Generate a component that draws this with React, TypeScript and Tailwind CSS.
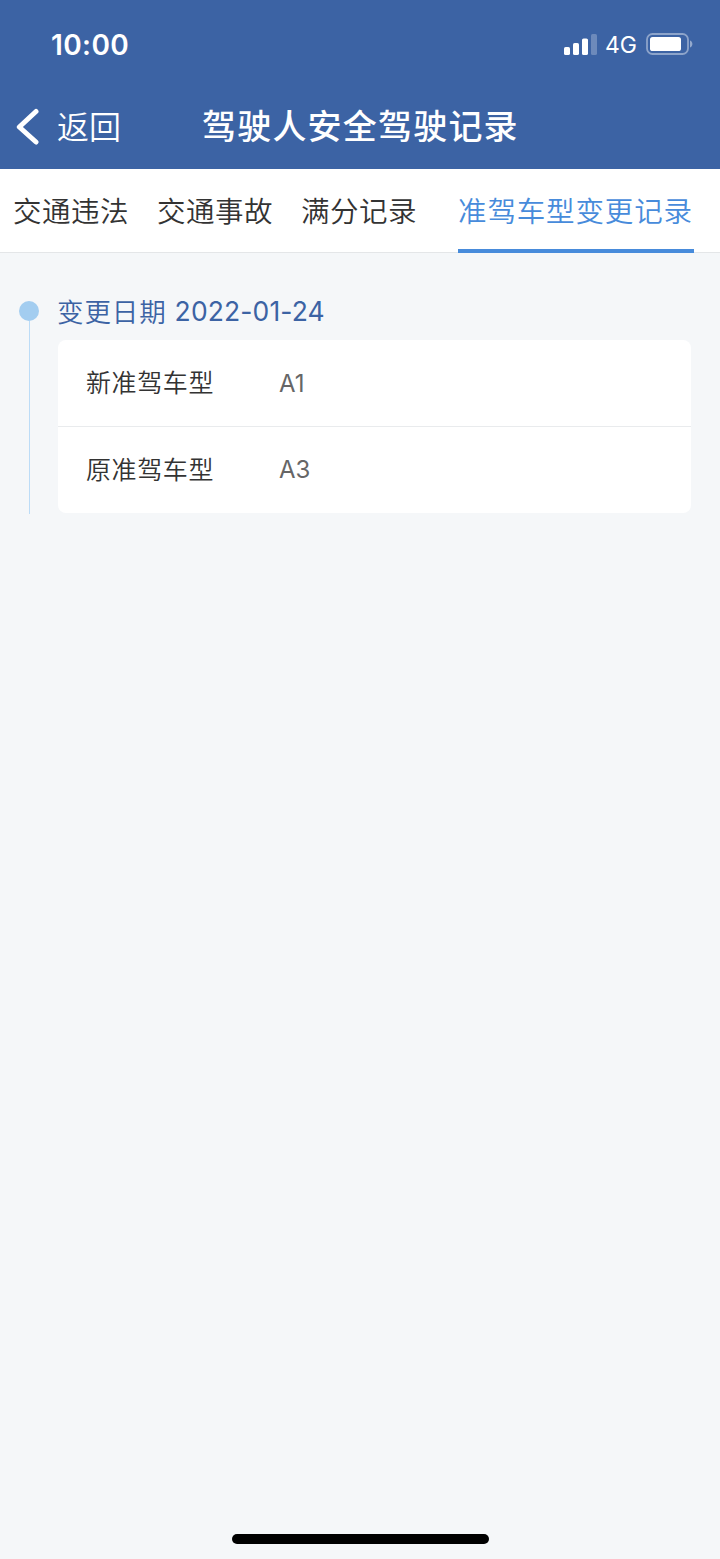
import type { ReactNode } from 'react';

const tabs = ['交通违法', '交通事故', '满分记录'];

const records = [
  { label: '新准驾车型', value: 'A1' },
  { label: '原准驾车型', value: 'A3' },
];

function StatusBar() {
  return (
    <div className="flex h-[88px] items-center justify-between pt-px pr-[27px] pl-[51px]">
      <span className="text-[28px] leading-[34px] font-semibold tracking-[0.4px]">10:00</span>
      <div className="flex items-center">
        <svg width="33" height="21" viewBox="0 0 33 21" fill="#fff">
          <rect x="0" y="13" width="6" height="8" rx="1.6" />
          <rect x="9" y="9" width="6" height="12" rx="1.6" />
          <rect x="18" y="4.5" width="6" height="16.5" rx="1.6" />
          <rect x="27" y="0" width="6" height="21" rx="1.6" opacity="0.25" />
        </svg>
        <span className="ml-[8px] w-[32px] pt-px text-[23px] leading-[30px]">4G</span>
        <svg className="mb-[2px] ml-[9px]" width="47" height="22" viewBox="0 0 47 22">
          <rect x="1" y="1" width="41" height="20" rx="5.5" fill="none" stroke="#fff" strokeWidth="1.8" opacity="0.42" />
          <rect x="4" y="4" width="31" height="14" rx="2.6" fill="#fff" />
          <path d="M44 7.5c3.2 1.1 3.2 5.9 0 7z" fill="#fff" opacity="0.45" />
        </svg>
      </div>
    </div>
  );
}

function NavBar() {
  return (
    <div className="grid h-[81px] grid-cols-[202px_1fr_202px] items-start pt-[16px]">
      <button className="flex h-[46px] items-center pl-[16px]">
        <svg width="24" height="38" viewBox="0 0 24 38" fill="none" stroke="#fff" strokeWidth="5" strokeLinecap="round" strokeLinejoin="round">
          <path d="M20 3.5 3.3 19 20 34" />
        </svg>
        <span className="ml-[17px] pt-[2px] text-[32px] leading-[46px] font-[350] whitespace-nowrap">返回</span>
      </button>
      <h1 className="pt-px text-[34px] leading-[44px] font-medium tracking-[1.2px] whitespace-nowrap">驾驶人安全驾驶记录</h1>
    </div>
  );
}

function Tab({ children, active = false }: { children: ReactNode; active?: boolean }) {
  return (
    <button
      className={
        active
          ? 'ml-[13px] h-[84px] w-[236px] border-b-4 border-[#478bdb] pt-[5px] text-left text-[28.5px] leading-[75px] font-[350] tracking-[0.85px] whitespace-nowrap text-[#478bdb]'
          : 'h-[84px] border-b-4 border-transparent pt-[5px] text-[28.5px] leading-[75px] font-[350] tracking-[0.5px] whitespace-nowrap text-[#333]'
      }
    >
      {children}
    </button>
  );
}

export default function App() {
  return (
    <div className="flex min-h-[1559px] w-[720px] flex-col overflow-hidden bg-[#f5f7f9] font-['Inter','Noto_Sans_CJK_SC',sans-serif]">
      <header className="bg-[#3c63a4] text-white">
        <StatusBar />
        <NavBar />
      </header>

      <nav className="flex h-[84px] gap-[28px] border-b border-[#e4e6e8] bg-white pl-[13px]">
        {tabs.map((tab) => (
          <Tab key={tab}>{tab}</Tab>
        ))}
        <Tab active>准驾车型变更记录</Tab>
      </nav>

      <main className="flex flex-1 items-start pt-[40px] pr-[29px] pl-[19px]">
        <div className="flex h-[221px] w-[20px] flex-col items-center pt-[8px]">
          <span className="size-[20px] shrink-0 rounded-full bg-[#a3cdf0]" />
          <span className="ml-px w-px flex-1 bg-[#bcdcf7]" />
        </div>
        <section className="ml-[19px] flex-1">
          <h2 className="-ml-px flex h-[47px] items-start text-[26.5px] leading-[36px] whitespace-nowrap text-[#3c63a4]">
            <span className="pt-px font-[350] tracking-[0.9px]">变更日期</span>
            <span className="ml-[8px] tracking-[0.12px]">2022-01-24</span>
          </h2>
          <dl className="overflow-hidden rounded-[8px] bg-white">
            {records.map((record) => (
              <div key={record.label} className="flex h-[86px] items-center border-t border-[#e9ebed] pl-[28px] text-[25px] first:border-t-0 last:h-[87px] last:pb-px">
                <dt className="w-[193px] pt-[2px] font-[350] tracking-[0.6px] text-[#333]">{record.label}</dt>
                <dd className="pt-px text-[24px] text-[#666]">{record.value}</dd>
              </div>
            ))}
          </dl>
        </section>
      </main>

      <footer className="flex h-[25px] justify-center pl-px">
        <div className="h-[10px] w-[257px] rounded-full bg-black" />
      </footer>
    </div>
  );
}
